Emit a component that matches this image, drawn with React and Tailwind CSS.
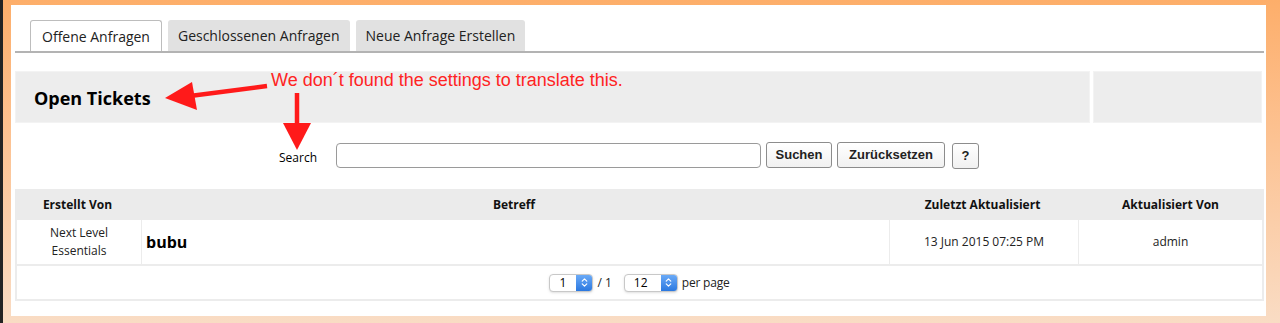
import { ChevronsUpDown } from 'lucide-react';

const tabs = [
  { id: 1, name: 'Offene Anfragen', active: true },
  { id: 2, name: 'Geschlossenen Anfragen' },
  { id: 3, name: 'Neue Anfrage Erstellen' },
];

const cols = 'grid grid-cols-[125px_748px_189px_1fr]';

const Stepper = ({ value, width }) => (
  <div className={`flex h-[18px] ${width} items-stretch overflow-hidden rounded-[4px] border border-[#c8c8c8] bg-white shadow-sm`}>
    <span className="flex flex-1 items-center pl-[9px] text-[12px] leading-none text-black">{value}</span>
    <span className="flex w-[16px] items-center justify-center bg-gradient-to-b from-[#6aaaf7] to-[#2a78e0]">
      <ChevronsUpDown size={11} strokeWidth={2.5} className="text-white" />
    </span>
  </div>
);

const Button = ({ children, width }) => (
  <button
    className={`h-[26px] ${width} rounded-[3px] border border-[#8c8c8c] bg-gradient-to-b from-white to-[#f1f1f1] text-[13px] font-bold text-[#222]`}
    style={{ fontFamily: '"Liberation Sans", Arial, sans-serif' }}
  >
    {children}
  </button>
);

export default function App() {
  return (
    <div
      className="h-[323px] w-[1280px] border-l-[3px] border-[#232323] bg-gradient-to-b from-[#fdae6a] to-[#f9dcc4] pb-[7px] pl-2 pr-[14px] pt-[5px]"
      style={{ fontFamily: '"Open Sans", sans-serif' }}
    >
      <div className="relative h-full bg-white pl-1 pr-[2px] pt-[15px]">
        {/* Tabs */}
        <div className="flex items-end gap-[6px] border-b-2 border-[#b3b3b3] pl-[15px]">
          {tabs.map((tab) => (
            <div
              key={tab.id}
              className={
                tab.active
                  ? 'flex h-[31px] items-center rounded-t-[3px] border border-b-0 border-[#bdbdbd] bg-white px-[11px] text-[14px] text-[#222]'
                  : 'flex h-[31px] items-center rounded-t-[3px] bg-[#e1e1e1] px-[10px] text-[14px] text-[#222]'
              }
            >
              {tab.name}
            </div>
          ))}
        </div>

        {/* Header */}
        <div className="mt-[18px] flex h-[52px] gap-[3px]">
          <div className="flex w-[1075px] items-center border border-[#f3f3f3] bg-[#ededed] pl-[18px] pt-[2px] text-[18px] font-bold text-black">
            Open Tickets
          </div>
          <div className="w-[169px] border border-[#f3f3f3] bg-[#ededed]" />
        </div>

        {/* Search */}
        <div className="mt-[19px] flex h-[27px] items-center pl-[264px]">
          <span className="pt-[4px] text-[12px] text-black">Search</span>
          <div className="ml-[19px] h-[25px] w-[425px] rounded-[4px] border border-[#9a9a9a] bg-white" />
          <div className="ml-[5px] flex gap-[5px]">
            <Button width="w-[66px]">Suchen</Button>
            <Button width="w-[108px]">Zurücksetzen</Button>
            <div className="ml-[2px]">
              <Button width="w-[27px]">?</Button>
            </div>
          </div>
        </div>

        {/* Table */}
        <div className="mt-[20px]">
          <div className={`${cols} h-[31px] items-center bg-[#ebebeb] text-[12px] font-bold text-[#111]`}>
            <div className="text-center">Erstellt Von</div>
            <div className="text-center">Betreff</div>
            <div className="text-center">Zuletzt Aktualisiert</div>
            <div className="text-center">Aktualisiert Von</div>
          </div>
          <div className={`${cols} h-[46px] border-x-2 border-b-2 border-[#ececec] text-[12px] text-[#222]`}>
            <div className="flex items-center justify-center border-r border-[#ececec] text-center leading-[18px]">
              Next Level
              <br />
              Essentials
            </div>
            <div className="flex items-center border-r border-[#ececec] pl-[4px] text-[16px] font-bold text-black">
              bubu
            </div>
            <div className="flex items-center justify-center border-r border-[#ececec]">13 Jun 2015 07:25 PM</div>
            <div className="flex items-center justify-center">admin</div>
          </div>
          <div className="flex h-[35px] items-center justify-center gap-[4px] border-x-2 border-b-2 border-[#ececec] text-[12px] text-[#222]">
            <Stepper value="1" width="w-[44px]" />
            <span className="mr-[8px]">/ 1</span>
            <Stepper value="12" width="w-[54px]" />
            <span className="tracking-[-0.2px]">per page</span>
          </div>
        </div>

        {/* Annotation */}
        <div
          className="absolute left-[260px] top-[62px] text-[18px] text-[#ff2323]"
          style={{ fontFamily: '"Liberation Sans", Arial, sans-serif' }}
        >
          We don´t found the settings to translate this.
        </div>
        <svg
          className="pointer-events-none absolute left-[149px] top-[75px]"
          width="170"
          height="80"
          viewBox="160 80 170 80"
        >
          <line x1="267" y1="86" x2="190" y2="96" stroke="#ff1a1a" strokeWidth="4.5" />
          <polygon points="165,98 192,82 197,110" fill="#ff1a1a" />
          <line x1="297" y1="93" x2="297" y2="126" stroke="#ff1a1a" strokeWidth="4.5" />
          <polygon points="283,123 311,123 297,150" fill="#ff1a1a" />
        </svg>
      </div>
    </div>
  );
}
